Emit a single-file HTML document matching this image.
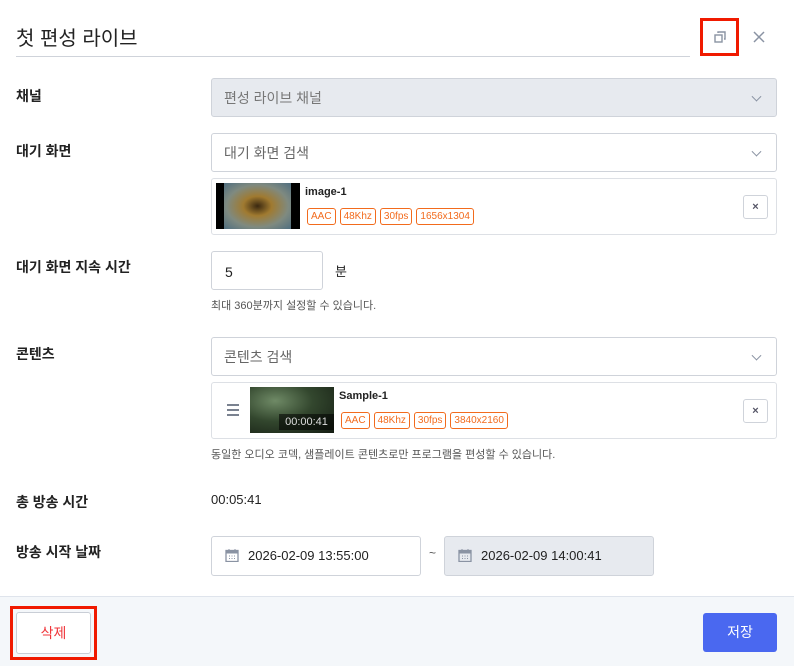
<!DOCTYPE html>
<html><head><meta charset="utf-8"><style>
*{box-sizing:border-box;margin:0;padding:0}
body{width:794px;height:666px;background:#fff;position:relative;overflow:hidden;font-family:"Liberation Sans","Noto Sans CJK KR",sans-serif;color:#222}
.a{position:absolute}
.lbl{position:absolute;left:16px;font-size:14px;font-weight:bold;color:#222;line-height:16px}
.box{position:absolute;border:1px solid #cfd3da;border-radius:3px;background:#fff}
.sel{font-size:14px;color:#666;padding-left:12px;display:flex;align-items:center}
.chev{position:absolute;right:16px;top:50%;width:7px;height:7px;border-right:1.5px solid #8a93a3;border-bottom:1.5px solid #8a93a3;transform:translateY(-70%) rotate(45deg)}
.tag{display:inline-block;border:1px solid #f26b1d;color:#f26b1d;border-radius:3px;font-size:10px;line-height:15px;padding:0 3px;margin-right:4px}
.xb{position:absolute;width:25px;height:24px;border:1px solid #cfd3da;border-radius:3px;font-size:11px;color:#556;text-align:center;line-height:22px;font-weight:bold}
.hint{position:absolute;font-size:11px;color:#555}
.cal{display:inline-block;width:14px;height:14px;margin-right:9px;vertical-align:-2px}
</style></head><body>
<div class="a" style="left:16px;top:22px;font-size:20px;color:#222">첫 편성 라이브</div>
<div class="a" style="left:16px;top:56px;width:674px;height:1px;background:#cfd3da"></div>
<div class="a" style="left:700px;top:18px;width:39px;height:38px;border:3px solid #f01a00"></div>
<svg class="a" style="left:713px;top:30px" width="14" height="14" viewBox="0 0 14 14" fill="none" stroke="#8a93a3" stroke-width="1.4"><rect x="2" y="5" width="7" height="7"/><path d="M5 3V2h7v7h-1"/></svg>
<svg class="a" style="left:753px;top:31px" width="12" height="12" viewBox="0 0 12 12" stroke="#8a93a3" stroke-width="1.5"><path d="M1 1L11 11M11 1L1 11"/></svg>

<div class="lbl" style="top:88px">채널</div>
<div class="box sel" style="left:211px;top:78px;width:566px;height:39px;background:#e7eaef;color:#777">편성 라이브 채널<span class="chev"></span></div>

<div class="lbl" style="top:143px">대기 화면</div>
<div class="box sel" style="left:211px;top:133px;width:566px;height:39px">대기 화면 검색<span class="chev"></span></div>
<div class="box" style="left:211px;top:178px;width:566px;height:57px;border-color:#dde0e5"></div>
<div class="a" style="left:216px;top:183px;width:84px;height:46px;background:#000"><div style="position:absolute;left:8px;top:0;width:67px;height:46px;background:radial-gradient(ellipse at 50% 50%,#3a2810 0,#a07a30 30%,#7f8a80 65%,#4f6e80 100%)"></div></div>
<div class="a" style="left:305px;top:186px;font-size:11px;font-weight:bold">image-1</div>
<div class="a" style="left:307px;top:206px"><span class="tag">AAC</span><span class="tag">48Khz</span><span class="tag">30fps</span><span class="tag">1656x1304</span></div>
<div class="xb" style="left:743px;top:195px">×</div>

<div class="lbl" style="top:259px">대기 화면 지속 시간</div>
<div class="box" style="left:211px;top:251px;width:112px;height:39px;font-size:14px;padding:12px 0 0 13px">5</div>
<div class="a" style="left:335px;top:261px;font-size:13px">분</div>
<div class="hint" style="left:211px;top:297px">최대 360분까지 설정할 수 있습니다.</div>

<div class="lbl" style="top:346px">콘텐츠</div>
<div class="box sel" style="left:211px;top:337px;width:566px;height:39px">콘텐츠 검색<span class="chev"></span></div>
<div class="box" style="left:211px;top:382px;width:566px;height:57px;border-color:#dde0e5"></div>
<div class="a" style="left:227px;top:404px;width:12px;height:2px;background:#7a8290;box-shadow:0 5px 0 #7a8290,0 10px 0 #7a8290"></div>
<div class="a" style="left:250px;top:387px;width:84px;height:46px;background:radial-gradient(ellipse at 30% 30%,#6f8a66 0,#33472e 45%,#141c12 100%)"></div>
<div class="a" style="left:279px;top:414px;width:55px;height:16px;background:rgba(0,0,0,.55);color:#ddd;font-size:11px;text-align:center;line-height:16px">00:00:41</div>
<div class="a" style="left:339px;top:390px;font-size:11px;font-weight:bold">Sample-1</div>
<div class="a" style="left:341px;top:410px"><span class="tag">AAC</span><span class="tag">48Khz</span><span class="tag">30fps</span><span class="tag">3840x2160</span></div>
<div class="xb" style="left:743px;top:399px">×</div>
<div class="hint" style="left:211px;top:446px">동일한 오디오 코덱, 샘플레이트 콘텐츠로만 프로그램을 편성할 수 있습니다.</div>

<div class="lbl" style="top:494px">총 방송 시간</div>
<div class="a" style="left:211px;top:492px;font-size:13px">00:05:41</div>

<div class="lbl" style="top:544px">방송 시작 날짜</div>
<div class="box" style="left:211px;top:536px;width:210px;height:40px;font-size:13px;padding:11px 0 0 13px"><svg class="cal" viewBox="0 0 14 14"><rect x="1" y="2.5" width="12" height="11" fill="none" stroke="#8a93a3" stroke-width="1.3"/><rect x="1" y="2.5" width="12" height="3" fill="#8a93a3"/><path d="M4 1v3M10 1v3" stroke="#8a93a3"/><path d="M4 8h1M6.5 8h1M9 8h1M4 10.5h1M6.5 10.5h1M9 10.5h1" stroke="#8a93a3"/></svg>2026-02-09 13:55:00</div>
<div class="a" style="left:429px;top:546px;font-size:12px;color:#555">~</div>
<div class="box" style="left:444px;top:536px;width:210px;height:40px;font-size:13px;padding:11px 0 0 13px;background:#e7eaef"><svg class="cal" viewBox="0 0 14 14"><rect x="1" y="2.5" width="12" height="11" fill="none" stroke="#8a93a3" stroke-width="1.3"/><rect x="1" y="2.5" width="12" height="3" fill="#8a93a3"/><path d="M4 1v3M10 1v3" stroke="#8a93a3"/><path d="M4 8h1M6.5 8h1M9 8h1M4 10.5h1M6.5 10.5h1M9 10.5h1" stroke="#8a93a3"/></svg>2026-02-09 14:00:41</div>

<div class="a" style="left:0;top:596px;width:794px;height:70px;background:#f4f7fa;border-top:1px solid #dfe4ec"></div>
<div class="a" style="left:10px;top:606px;width:87px;height:54px;border:3px solid #f01a00"></div>
<div class="a" style="left:16px;top:612px;width:75px;height:42px;background:#fff;border:1px solid #c9ced6;border-radius:3px;color:#f0353a;font-size:14px;text-align:center;line-height:40px">삭제</div>
<div class="a" style="left:703px;top:613px;width:74px;height:39px;background:#4a68f0;border-radius:3px;color:#fff;font-size:14px;text-align:center;line-height:39px">저장</div>
</body></html>
